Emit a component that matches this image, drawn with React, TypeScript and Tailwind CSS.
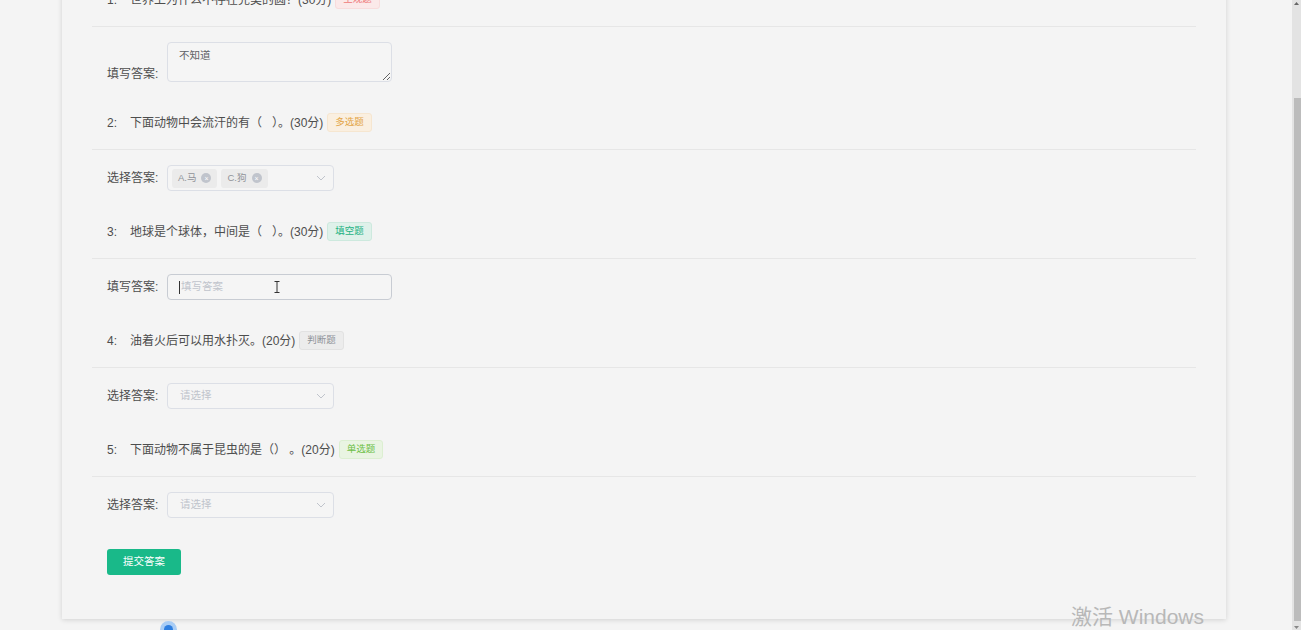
import type { FC, ReactNode } from "react"

const FONT = { fontFamily: '"Liberation Sans", "Noto Sans CJK SC", sans-serif' }

type TagKind = "red" | "orange" | "teal" | "gray" | "green"

const tagClass: Record<TagKind, string> = {
  red: "bg-[#fbe9e9] border-[#f8dcdc] text-[#ee7a7a]",
  orange: "bg-[#faefe0] border-[#f6e6d0] text-[#e3a546]",
  teal: "bg-[#dff1ea] border-[#cde9de] text-[#1fb283]",
  gray: "bg-[#ececec] border-[#e2e2e2] text-[#8f9399]",
  green: "bg-[#e9f4e2] border-[#dcefd1] text-[#6cbf45]",
}

const Tag: FC<{ kind: TagKind; children: ReactNode }> = ({ kind, children }) => (
  <span
    className={`ml-1 inline-flex h-[19px] items-center rounded-[3px] border px-[7px] text-[9.5px] ${tagClass[kind]}`}
  >
    {children}
  </span>
)

const Question: FC<{ no: number; text: string; kind: TagKind; tag: string }> = ({ no, text, kind, tag }) => (
  <div className="flex h-[68px] items-end border-b border-[#e6e6e6] px-[15px] pb-[17px] text-[12px] text-[#4d4d4d]">
    <div className="flex h-[19px] items-center">
      <span className="w-[23px]">{no}:</span>
      <span className="whitespace-pre">{text}</span>
      <Tag kind={kind}>{tag}</Tag>
    </div>
  </div>
)

const Chevron = () => (
  <svg width="10" height="6" viewBox="0 0 10 6" className="text-[#c0c4cc]">
    <path d="M1 1 L5 5 L9 1" fill="none" stroke="currentColor" strokeWidth="1" />
  </svg>
)

const Chip: FC<{ label: string }> = ({ label }) => (
  <span className="flex h-[19px] items-center gap-[5px] rounded-[3px] bg-[#ebebeb] px-[6px] text-[9.5px] text-[#909399]">
    {label}
    <span className="flex h-[10px] w-[10px] items-center justify-center rounded-full bg-[#c0c4cc] text-[7px] leading-none text-white">
      ×
    </span>
  </span>
)

const Select: FC<{ children?: ReactNode }> = ({ children }) => (
  <div className="flex h-[26px] w-[167px] items-center justify-between rounded-[4px] border border-[#dcdfe6] bg-[#f5f5f5] pl-[4px] pr-[7px]">
    <div className="flex items-center gap-[4px]">
      {children ?? <span className="pl-[8px] text-[10.5px] text-[#c0c4cc]">请选择</span>}
    </div>
    <Chevron />
  </div>
)

const Answer: FC<{ label: string; end?: boolean; children: ReactNode }> = ({ label, end, children }) => (
  <div className={`flex px-[15px] pt-[15px] text-[12px] text-[#4d4d4d] ${end ? "items-end" : "items-center"}`}>
    <span className="w-[60px] shrink-0 leading-[16px]">{label}:</span>
    {children}
  </div>
)

export default function App() {
  return (
    <div className="relative flex h-[630px] w-full overflow-hidden bg-[#f4f4f4]" style={FONT}>
      <div className="flex-1">
        <div className="ml-[62px] mr-[66px] -mt-[41px] bg-[#f4f4f4] px-[30px] pb-[44px] shadow-[0_1px_5px_rgba(0,0,0,0.14)]">
          <Question no={1} text="世界上为什么不存在完美的圆？(30分)" kind="red" tag="主观题" />
          <Answer label="填写答案" end>
            <textarea
              readOnly
              defaultValue="不知道"
              className="block h-[40px] w-[225px] rounded-[4px] border border-[#dcdfe6] bg-[#f5f5f5] px-[11px] py-[5px] text-[10.5px] text-[#606266] outline-none"
            />
          </Answer>

          <Question no={2} text="下面动物中会流汗的有（   ）。(30分)" kind="orange" tag="多选题" />
          <Answer label="选择答案">
            <Select>
              <Chip label="A.马" />
              <Chip label="C.狗" />
            </Select>
          </Answer>

          <Question no={3} text="地球是个球体，中间是（   ）。(30分)" kind="teal" tag="填空题" />
          <Answer label="填写答案">
            <div className="relative flex h-[26px] w-[225px] items-center rounded-[4px] border border-[#c8ccd3] bg-[#f5f5f5] px-[11px]">
              <span className="mr-[1px] h-[13px] w-px bg-[#333]" />
              <span className="text-[10.5px] text-[#c0c4cc]">填写答案</span>
              <svg width="6" height="12" viewBox="0 0 6 12" className="absolute left-[106px] top-[6px]">
                <path d="M0.5 0.5 H5.5 M3 0.5 V11.5 M0.5 11.5 H5.5" fill="none" stroke="#333" strokeWidth="1" />
              </svg>
            </div>
          </Answer>

          <Question no={4} text="油着火后可以用水扑灭。(20分)" kind="gray" tag="判断题" />
          <Answer label="选择答案">
            <Select />
          </Answer>

          <Question no={5} text="下面动物不属于昆虫的是（） 。(20分)" kind="green" tag="单选题" />
          <Answer label="选择答案">
            <Select />
          </Answer>

          <div className="px-[15px] pt-[30px]">
            <button className="h-[26px] w-[74px] rounded-[3px] bg-[#19b989] text-[10.5px] text-white">提交答案</button>
          </div>
        </div>
      </div>

      <div className="flex w-[9px] flex-col bg-[#e3e3e3]">
        <div className="flex h-[98px] justify-center pt-[2px]">
          <svg width="5" height="3" viewBox="0 0 5 3">
            <path d="M0 3 L2.5 0 L5 3 Z" fill="#666" />
          </svg>
        </div>
        <div className="ml-[2px] flex-1 bg-[#bcbcbc]" />
        <div className="flex h-[9px] items-end justify-center pb-[1px]">
          <svg width="5" height="3" viewBox="0 0 5 3">
            <path d="M0 0 L2.5 3 L5 0 Z" fill="#888" />
          </svg>
        </div>
      </div>

      <div className="pointer-events-none absolute left-[1071px] top-[604px] text-[21px] leading-[26px] text-[#b8b8b8]">
        激活 Windows
      </div>
      <div className="pointer-events-none absolute left-[160px] top-[621px] flex h-[17px] w-[17px] items-center justify-center rounded-full bg-[#a9cdf5]">
        <span className="h-[9px] w-[9px] rounded-full bg-[#2f7fe0]" />
      </div>
    </div>
  )
}
